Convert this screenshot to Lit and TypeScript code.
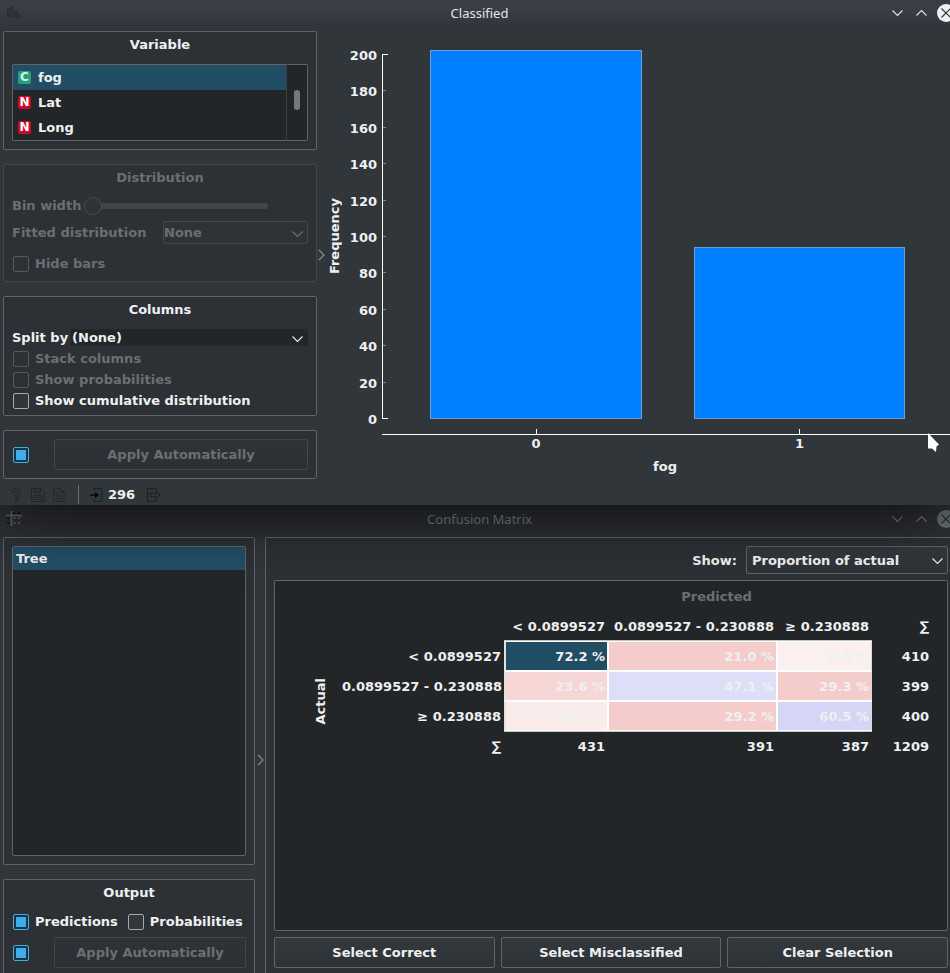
import { LitElement, html, svg, css, nothing } from "lit";
import { customElement, property } from "lit/decorators.js";
import { classMap } from "lit/directives/class-map.js";

const controls = css`
  * { box-sizing: border-box; }
  :host {
    --window: #31363b;
    --panel: #2d3035;
    --base: #232629;
    --line: #616568;
    --line-off: #43474b;
    --text: #eff0f1;
    --text-off: #6b6f72;
    --select: #224e65;
    --accent: #3daee9;
    color: var(--text);
    font: bold 13px/16px "DejaVu Sans", sans-serif;
  }
  .body { display: flex; flex: 1; padding-left: 3px; min-height: 0; }
  .sidebar { display: flex; flex-direction: column; gap: 14px; flex: none; }
  .splitter { display: flex; flex: none; width: 10px; align-items: center; justify-content: center; }
  .panel { background: var(--panel); border: 1px solid var(--line); border-radius: 2px; padding: 5px 8px 8px; }
  .panel.off { border-color: var(--line-off); color: var(--text-off); }
  .panel.plain { padding-top: 8px; }
  .heading { margin: 0 0 11px; font: inherit; text-align: center; }
  .list { margin: 0; padding: 0; list-style: none; background: var(--base); border: 1px solid var(--line); border-radius: 2px; }
  .check { display: flex; align-items: center; gap: 6px; height: 21px; padding-left: 1px; }
  .check.off { color: var(--text-off); }
  input[type="checkbox"] {
    appearance: none; flex: none; width: 16px; height: 16px; margin: 0; padding: 2px;
    border: 1px solid #a5a8aa; border-radius: 2px; background-color: var(--window);
  }
  input[type="checkbox"]:disabled { border-color: #55595c; background-color: var(--panel); }
  input[type="checkbox"]:checked {
    border-color: var(--accent);
    background: linear-gradient(var(--accent), var(--accent)) content-box, #1e3340;
  }
  button {
    height: 31px; padding: 0 8px; color: inherit; font: inherit; border-radius: 2px;
    border: 1px solid var(--line); background: linear-gradient(#33383c, #2e3338);
  }
  button:disabled { color: var(--text-off); border-color: var(--line-off); background: linear-gradient(#2f3338, #2c3034); }
  .auto { display: flex; align-items: center; gap: 25px; padding-left: 1px; }
  .auto button { flex: 1; }
  .combo { position: relative; display: flex; }
  .combo select {
    appearance: none; width: 100%; height: 23px; margin: 0; padding: 0; color: inherit; font: inherit;
    border: 1px solid var(--line); border-radius: 2px; background: linear-gradient(#33383c, #2e3338); opacity: 1;
  }
  .combo select:disabled { border-color: var(--line-off); background: #2f3338; }
  .combo svg { position: absolute; right: 4px; top: 50%; margin-top: -5px; pointer-events: none; }
  svg { display: block; flex: none; }
`;

const chevron = (dir: "down" | "up" | "right", color = "currentColor") => {
  const d = { down: "M1.5 3.5 6.5 8.5 11.5 3.5", up: "M1.5 8.5 6.5 3.5 11.5 8.5", right: "M4 1 9 6 4 11" }[dir];
  return html`<svg width="13" height="12" viewBox="0 0 13 12" fill="none" stroke=${color} stroke-width="1.1"><path d=${d} /></svg>`;
};

@customElement("title-bar")
class TitleBar extends LitElement {
  @property() label = "";
  @property({ type: Boolean, reflect: true }) inactive = false;

  static styles = css`
    :host { display: grid; grid-template-columns: 1fr auto 1fr; align-items: center; height: 31px; padding: 0 0 6px;
      box-sizing: border-box; background: linear-gradient(#373c45, #3a3e47 20%, #31363b 85%);
      color: #e4e5e6; font: 13px/18px "Noto Sans", sans-serif; }
    :host([inactive]) { height: 32px; background: #2d3035; color: #7d8184; padding-bottom: 5px; }
    .icon { padding-left: 6px; }
    .name { padding-left: 9px; }
    .tools { display: flex; justify-content: flex-end; align-items: center; gap: 11px; overflow: hidden; }
    .close { width: 13px; height: 18px; overflow: hidden; margin-left: -2px; }
    svg { display: block; }
  `;

  render() {
    const hole = this.inactive ? "#2a2d31" : "#31363b";
    const disc = this.inactive ? "#687071" : "#eff0f1";
    const icon = this.inactive
      ? svg`<path d="M0 4.500h16M5.500 0v15" stroke="#64686a" stroke-width="1.500"/>
          <path d="M7 1h2v2h-2zM12 1h2v2h-2zM1 6h2v2h-2zM1 11h2v2h-2z" fill="#15171a"/>
          <path d="M7.500 6h2v2h-2zM7.500 11h2v2h-2zM12 6h2v2h-2zM12 11h2v2h-2z" fill="#575b5e"/>`
      : svg`<path d="M1 3h3v10h-3zM4.500 1h3v12h-3zM8 5h3.500v8h-3.500zM12 9h3v4h-3z" fill="#2d2f31"/>`;
    return html`
      <div class="icon"><svg width="16" height="15" viewBox="0 0 16 15">${icon}</svg></div>
      <div class="name">${this.label}</div>
      <div class="tools">
        ${chevron("down")}${chevron("up")}
        <div class="close">
          <svg width="18" height="18" viewBox="0 0 18 18">
            <circle cx="9" cy="9" r="9" fill=${disc} />
            <path d="M4.500 4.500l9 9M13.500 4.500l-9 9" stroke=${hole} stroke-width="1.200" />
          </svg>
        </div>
      </div>`;
  }
}

@customElement("bar-chart")
class BarChart extends LitElement {
  private bars = [{ name: "0", count: 202 }, { name: "1", count: 94 }];
  private ticks = [200, 180, 160, 140, 120, 100, 80, 60, 40, 20, 0];

  static styles = css`
    :host { display: block; flex: 1; padding: 17px 0 30px; --cols: 42fr 212fr 52fr 211fr 45fr; position: relative; }
    .plot { display: grid; grid-template-columns: 18px 32px 11px 1fr; height: 381px; }
    .ylabel { display: flex; align-items: center; justify-content: center; padding: 0 2px 5px 0; }
    .ylabel span { writing-mode: vertical-rl; transform: rotate(180deg); }
    .scale { display: flex; flex-direction: column; justify-content: space-between; text-align: right; padding-bottom: 1px; }
    .axis { display: flex; flex-direction: column; justify-content: space-between; margin: 6px 0 10px 5px; border-left: 1px solid #fff; }
    .tick { width: 3px; height: 1px; background: #808386; }
    .tick.end { width: 5px; background: #fff; }
    .bars { display: grid; grid-template-columns: var(--cols); align-items: end; margin: 2px 0 10px; }
    .bar { background: #007fff; border: 1px solid #6f9fcf; box-sizing: border-box; }
    .c0 { grid-column: 2; } .c1 { grid-column: 4; }
    .base { margin-left: 55px; padding-left: 6px; display: grid; grid-template-columns: var(--cols); height: 6px; border-bottom: 1px solid #fff; box-sizing: border-box; }
    .mark { width: 1px; background: #fff; justify-self: center; }
    .names { margin-left: 55px; padding: 1px 0 0 6px; display: grid; grid-template-columns: var(--cols); text-align: center; }
    .xlabel { margin: 7px 0 0 53px; text-align: center; }
    .pointer { position: absolute; right: 9px; bottom: 52px; }
  `;

  render() {
    const top = Math.max(...this.bars.map((b) => b.count));
    return html`
      <div class="plot">
        <div class="ylabel"><span>Frequency</span></div>
        <div class="scale">${this.ticks.map((t) => html`<span>${t}</span>`)}</div>
        <div class="axis">${this.ticks.map((t) => html`<i class=${classMap({ tick: true, end: t === 0 || t === 200 })}></i>`)}</div>
        <div class="bars">${this.bars.map((b, i) => html`<div class="bar c${i}" style="height:${(b.count / top) * 100}%"></div>`)}</div>
      </div>
      <div class="base"><i class="mark c0"></i><i class="mark c1"></i></div>
      <div class="names">${this.bars.map((b, i) => html`<span class="c${i}">${b.name}</span>`)}</div>
      <div class="xlabel">fog</div>
      <svg class="pointer" width="13" height="20" viewBox="0 0 13 20"><path d="M0 0L11 11.500L8.500 13.500L8 19L4 15.500L0 15.500Z" fill="#fff"/></svg>`;
  }
}

@customElement("distributions-window")
class DistributionsWindow extends LitElement {
  private variables = [
    { kind: "C", name: "fog" },
    { kind: "N", name: "Lat" },
    { kind: "N", name: "Long" },
  ];

  static styles = [controls, css`
    :host { display: flex; flex-direction: column; position: relative; z-index: 1; background: var(--window); box-shadow: 0 8px 56px rgba(0, 0, 0, 0.75); }
    .sidebar { width: 314px; }
    .vars { display: flex; }
    .vars .list { flex: 1; border-radius: 2px 0 0 2px; border-right-color: #3c4043; }
    .var { display: flex; align-items: center; gap: 7px; height: 25px; padding-left: 5px; }
    .var.on { background: var(--select); }
    .badge { width: 13px; height: 13px; border-radius: 2px; background: #cb0a2d; color: #fff; font-size: 12px; line-height: 13px; text-align: center; }
    .badge.c { background: #28a077; color: #cdf3ee; }
    .track { width: 21px; display: flex; align-items: center; justify-content: center; padding: 0 1px 6px 0; background: var(--base); border: 1px solid var(--line); border-left: 0; border-radius: 0 2px 2px 0; }
    .thumb { width: 6px; height: 20px; border-radius: 3px; background: #76797c; }
    .row { display: flex; align-items: center; }
    .slide { gap: 3px; height: 18px; margin-bottom: 6px; }
    input[type="range"] { appearance: none; width: 184px; height: 18px; margin: 0; background: none; }
    input[type="range"]::-webkit-slider-runnable-track { height: 6px; border-radius: 3px; background: #414549; }
    input[type="range"]::-webkit-slider-thumb { appearance: none; width: 18px; height: 18px; margin-top: -6px; border-radius: 9px; border: 1px solid #484c50; background: #2f3338; }
    .fit { justify-content: space-between; }
    .fit .combo { width: 145px; }
    .hide { margin-top: 9px; }
    .split { gap: 3px; height: 17px; margin-bottom: 2px; }
    .split .combo { flex: 1; }
    .split select { height: 17px; border: 0; border-radius: 0; background: var(--base); padding-left: 1px; }
    .tail { padding-bottom: 4px; }
    .distribution { padding-bottom: 7px; }
    .status { display: flex; align-items: center; height: 13px; margin-top: -5px; padding: 0 0 0 8px; }
    .status .rule { width: 1px; height: 19px; margin: 0 11px 0 13px; background: #6a6d70; }
    .status .help { margin-right: 9px; } .status .save { margin-right: 8px; }
    .status .in { margin-right: 5px; } .status .out { margin-left: 12px; }
    .splitter { padding: 0 2px 27px 0; }
  `];

  render() {
    return html`
      <title-bar label="Classified"></title-bar>
      <div class="body">
        <div class="sidebar">
          <section class="panel">
            <h2 class="heading">Variable</h2>
            <div class="vars">
              <ul class="list" role="listbox" aria-label="Variable">
                ${this.variables.map((v, i) => html`<li role="option" aria-selected=${i === 0} class=${classMap({ var: true, on: i === 0 })}>
                  <span class=${classMap({ badge: true, c: v.kind === "C" })}>${v.kind}</span>${v.name}</li>`)}
              </ul>
              <div class="track"><div class="thumb"></div></div>
            </div>
          </section>
          <section class="panel off distribution">
            <h2 class="heading">Distribution</h2>
            <div class="row slide"><label for="bin">Bin width</label><input id="bin" type="range" min="0" max="10" value="0" disabled /></div>
            <div class="row fit"><label for="fit">Fitted distribution</label>
              <div class="combo"><select id="fit" disabled><option>None</option></select>${chevron("down")}</div></div>
            <label class="check hide"><input type="checkbox" disabled />Hide bars</label>
          </section>
          <section class="panel tail">
            <h2 class="heading">Columns</h2>
            <div class="row split"><label for="split">Split by</label>
              <div class="combo"><select id="split"><option>(None)</option></select>${chevron("down")}</div></div>
            <label class="check off"><input type="checkbox" disabled />Stack columns</label>
            <label class="check off"><input type="checkbox" disabled />Show probabilities</label>
            <label class="check"><input type="checkbox" />Show cumulative distribution</label>
          </section>
          <section class="panel plain">
            <div class="auto"><input type="checkbox" aria-label="Apply automatically" checked /><button disabled>Apply Automatically</button></div>
          </section>
          <div class="status">
            <svg class="help" width="11" height="14" viewBox="0 0 11 14" fill="none" stroke="#232528"><path d="M1.500 4.500V3L3.500 .500h4L9.500 3v2.500L7 8v1.500H4.500V7L7 4.800V3.500L6.200 2.800H4.800L4 3.500v1zM4.500 11.500h2.500v2H4.500z"/></svg>
            <svg class="save" width="14" height="14" viewBox="0 0 14 14" fill="none" stroke="#232528"><path d="M.5.500h10l3 3v10H.500zM3.500.500v4h6v-4M7.500 1.500v2M3 13V7.500h8V13M4.500 9.500h5M4.500 11.500h5"/></svg>
            <svg width="12" height="14" viewBox="0 0 12 14" fill="none" stroke="#232528"><path d="M1 .500h6.500l3.500 3.500v9.500H1zM7.500.500V4H11M3 5.500h3M3 8h6M3 10.500h6"/></svg>
            <span class="rule"></span>
            <svg class="in" width="13" height="14" viewBox="0 0 13 14" fill="none" stroke="#1c1e20"><path d="M4 3V.500h8v13H4V11"/><path d="M0 7h6" stroke="#000" stroke-width="1.300"/><path d="M5 4l4 3-4 3z" fill="#000" stroke="none"/></svg>
            <span>296</span>
            <svg class="out" width="14" height="14" viewBox="0 0 14 14" fill="none" stroke="#1c1e20"><path d="M9.500 3V.500H.500v13h9V11M3 5.500h6v-2.500l4 4-4 4V8.500H3z"/></svg>
          </div>
        </div>
        <div class="splitter">${chevron("right", "#8c9093")}</div>
        <bar-chart></bar-chart>
      </div>`;
  }
}

@customElement("confusion-window")
class ConfusionWindow extends LitElement {
  private classes = ["< 0.0899527", "0.0899527 - 0.230888", "≥ 0.230888"];
  private rows = [
    { cells: [["72.2 %", "picked"], ["21.0 %", "rose"], ["6.8 %", "blush"]], sum: 410 },
    { cells: [["23.6 %", "pink"], ["47.1 %", "lilac"], ["29.3 %", "rose"]], sum: 399 },
    { cells: [["10.2 %", "faint"], ["29.2 %", "rose"], ["60.5 %", "violet"]], sum: 400 },
  ];

  static styles = [controls, css`
    :host { display: flex; flex-direction: column; flex: 1; background: var(--window); overflow: hidden; }
    .sidebar { width: 252px; }
    .splitter { padding-top: 10px; }
    .models { flex: 1; display: flex; }
    .models .list { flex: 1; }
    .model { height: 23px; padding: 4px 3px 3px; background: var(--select); }
    .output { border-bottom: 0; border-radius: 2px 2px 0 0; padding-bottom: 5px; }
    .output .heading { margin-bottom: 10px; }
    .pair { display: flex; gap: 9px; margin-bottom: 5px; }
    .main { flex: 1; display: flex; flex-direction: column; gap: 6px; min-width: 0; padding: 8px 2px 5px 8px; border-width: 1px 0 0 1px; border-radius: 2px 0 0 0; }
    .show { display: flex; justify-content: flex-end; align-items: center; gap: 9px; }
    .show label { padding-top: 1px; }
    .show .combo { width: 202px; }
    .show select { height: 28px; padding: 1px 0 0 5px; }
    .matrix { flex: 1; background: var(--base); border: 1px solid var(--line); border-radius: 2px; padding-left: 25px; }
    table { border-collapse: separate; border-spacing: 0; table-layout: fixed; width: 632px; }
    th, td { height: 30px; padding: 2px 3px 0 0; text-align: right; font-weight: bold; white-space: nowrap; }
    .side { width: 42px; } .rowhead { width: 162px; } .first { width: 104px; } .second { width: 169px; } .third { width: 95px; }
    .top { color: var(--text-off); text-align: center; }
    .actual { text-align: center; vertical-align: middle; padding: 0; }
    .actual span { display: inline-block; writing-mode: vertical-rl; transform: rotate(180deg); vertical-align: middle; }
    .cell { border: 1px solid #fff; padding: 2px 2px 0 0; }
    .grid-top .cell { box-shadow: 0 -1px #c5c5c0; }
    .grid-low .cell { box-shadow: 0 1px #c5c5c0; }
    tr .cell.start { border-left: 2px solid #e2e2df; }
    tr .cell.end { border-right-color: #dadad6; }
    .picked { background: var(--select); } .rose { background: #f4cccc; } .blush { background: #fcefef; }
    .pink { background: #f7d6d6; } .lilac { background: #dedef9; } .faint { background: #fbecec; } .violet { background: #d5d5f5; }
    .actions { display: grid; grid-template-columns: repeat(3, 1fr); gap: 6px; }
  `];

  render() {
    return html`
      <title-bar label="Confusion Matrix" inactive></title-bar>
      <div class="body">
        <div class="sidebar">
          <section class="panel plain models">
            <ul class="list" role="listbox" aria-label="Models"><li class="model" role="option" aria-selected="true">Tree</li></ul>
          </section>
          <section class="panel output">
            <h2 class="heading">Output</h2>
            <div class="pair">
              <label class="check"><input type="checkbox" checked />Predictions</label>
              <label class="check"><input type="checkbox" />Probabilities</label>
            </div>
            <div class="auto"><input type="checkbox" aria-label="Apply automatically" checked /><button disabled>Apply Automatically</button></div>
          </section>
        </div>
        <div class="splitter">${chevron("right", "#8c9093")}</div>
        <section class="panel main">
          <div class="show"><label for="show">Show:</label>
            <div class="combo"><select id="show"><option>Proportion of actual</option></select>${chevron("down")}</div></div>
          <div class="matrix">
            <table>
              <colgroup><col class="side" /><col class="rowhead" /><col class="first" /><col class="second" /><col class="third" /><col /></colgroup>
              <thead>
                <tr><td colspan="2"></td><th class="top" colspan="4">Predicted</th></tr>
                <tr><td colspan="2"></td>${this.classes.map((c) => html`<th scope="col">${c}</th>`)}<th scope="col">∑</th></tr>
              </thead>
              <tbody>
                ${this.rows.map((r, i) => html`<tr class=${classMap({ "grid-top": i === 0, "grid-low": i === 2 })}>
                  ${i === 0 ? html`<th class="actual" rowspan="4"><span>Actual</span></th>` : nothing}
                  <th scope="row">${this.classes[i]}</th>
                  ${r.cells.map(([t, tone], c) => html`<td class="cell ${tone} ${["start", "", "end"][c]}">${t}</td>`)}
                  <td>${r.sum}</td></tr>`)}
                <tr><th scope="row">∑</th><td>431</td><td>391</td><td>387</td><td>1209</td></tr>
              </tbody>
            </table>
          </div>
          <div class="actions"><button>Select Correct</button><button>Select Misclassified</button><button>Clear Selection</button></div>
        </section>
      </div>`;
  }
}

@customElement("app-root")
class AppRoot extends LitElement {
  static styles = css`
    :host { display: flex; flex-direction: column; min-height: 100vh; overflow: hidden; background: #31363b; }
  `;
  render() {
    return html`<distributions-window></distributions-window><confusion-window></confusion-window>`;
  }
}
